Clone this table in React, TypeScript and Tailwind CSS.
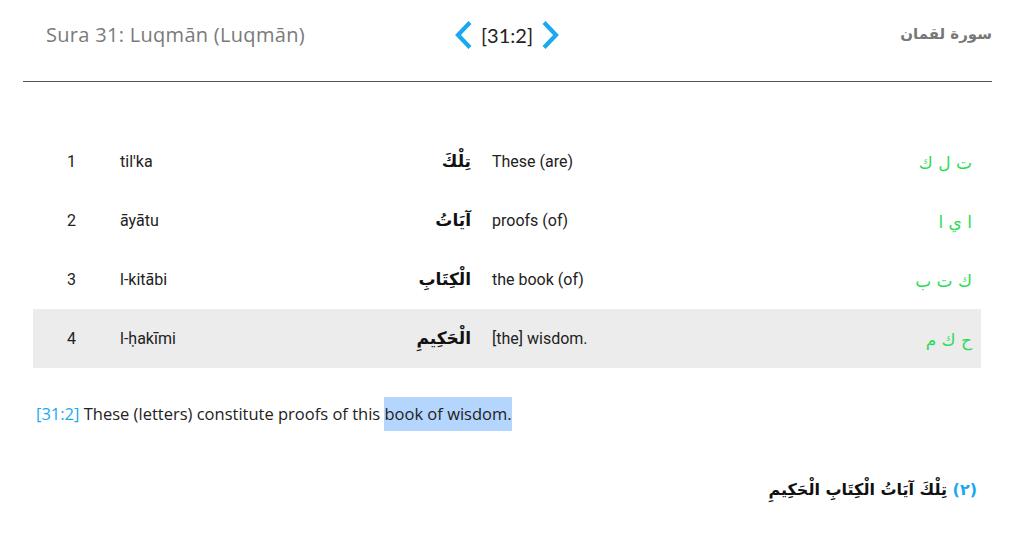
import React from "react"

const arabic = "'DejaVu Sans', 'Noto Sans', sans-serif"

interface WordRow {
  n: number
  translit: string
  word: string
  meaning: string
  root: string
}

const rows: WordRow[] = [
  { n: 1, translit: "til'ka", word: "تِلْكَ", meaning: "These (are)", root: "ت ل ك" },
  { n: 2, translit: "āyātu", word: "آيَاتُ", meaning: "proofs (of)", root: "ا ي ا" },
  { n: 3, translit: "l-kitābi", word: "الْكِتَابِ", meaning: "the book (of)", root: "ك ت ب" },
  { n: 4, translit: "l-ḥakīmi", word: "الْحَكِيمِ", meaning: "[the] wisdom.", root: "ح ك م" },
]

function Chevron({ dir }: { dir: "left" | "right" }) {
  return (
    <svg width="18" height="28" viewBox="0 0 18 28" className="shrink-0">
      <path
        d={dir === "left" ? "M14.5 3 L4 14 L14.5 25" : "M3.5 3 L14 14 L3.5 25"}
        fill="none"
        stroke="#1aa9f0"
        strokeWidth="4.2"
        strokeLinecap="square"
      />
    </svg>
  )
}

export default function App() {
  return (
    <div className="w-[1023px] h-[541px] bg-white overflow-hidden font-['Roboto',sans-serif]">
      {/* header */}
      <div className="ml-[23px] mr-[31px] h-[82px] border-b border-[#555] flex items-center pl-[23px] pb-[12px]">
        <div className="w-[408px] text-[20px] tracking-[0.3px] text-[#7a7a7a] font-['Open_Sans',sans-serif]">
          Sura 31: Luqmān (Luqmān)
        </div>
        <div className="flex items-center gap-[9px] text-[20px] text-[#222] font-['Lato',sans-serif]">
          <Chevron dir="left" />
          <span>[31:2]</span>
          <Chevron dir="right" />
        </div>
        <div
          dir="rtl"
          className="flex-1 text-right text-[15px] font-bold text-[#777]"
          style={{ fontFamily: arabic }}
        >
          سورة لقمان
        </div>
      </div>

      {/* word table */}
      <div className="mx-[33px] w-[948px] mt-[50px]">
        {rows.map((r) => (
          <div
            key={r.n}
            className={`h-[59px] flex items-center text-[16px] text-[#222] ${r.n === 4 ? "bg-[#ececec]" : ""}`}
          >
            <div className="w-[87px] pl-[34px]">{r.n}</div>
            <div className="w-[251px]">{r.translit}</div>
            <div
              dir="rtl"
              className="w-[100px] text-right text-[17px] font-bold text-[#111]"
              style={{ fontFamily: arabic }}
            >
              {r.word}
            </div>
            <div className="ml-[21px] w-[200px]">{r.meaning}</div>
            <div
              dir="rtl"
              className="flex-1 pr-[9px] text-right text-[17px] text-[#2ddb58] pt-[4px]"
              style={{ fontFamily: arabic }}
            >
              {r.root}
            </div>
          </div>
        ))}
      </div>

      {/* translation */}
      <p className="mt-[29px] pl-[36px] text-[16.5px] leading-[34px] text-[#222] font-['Open_Sans',sans-serif]">
        <span className="text-[#1aa9f0]">[31:2]</span> These (letters) constitute proofs of this{" "}
        <span className="inline-block bg-[#b4d5fd]">book of wisdom.</span>
      </p>

      {/* verse */}
      <div
        dir="rtl"
        className="mt-[47px] pr-[46px] text-right text-[16px] font-bold text-[#111]"
        style={{ fontFamily: arabic }}
      >
        <span className="text-[#1aa9f0]">(٢)</span> تِلْكَ آيَاتُ الْكِتَابِ الْحَكِيمِ
      </div>
    </div>
  )
}
